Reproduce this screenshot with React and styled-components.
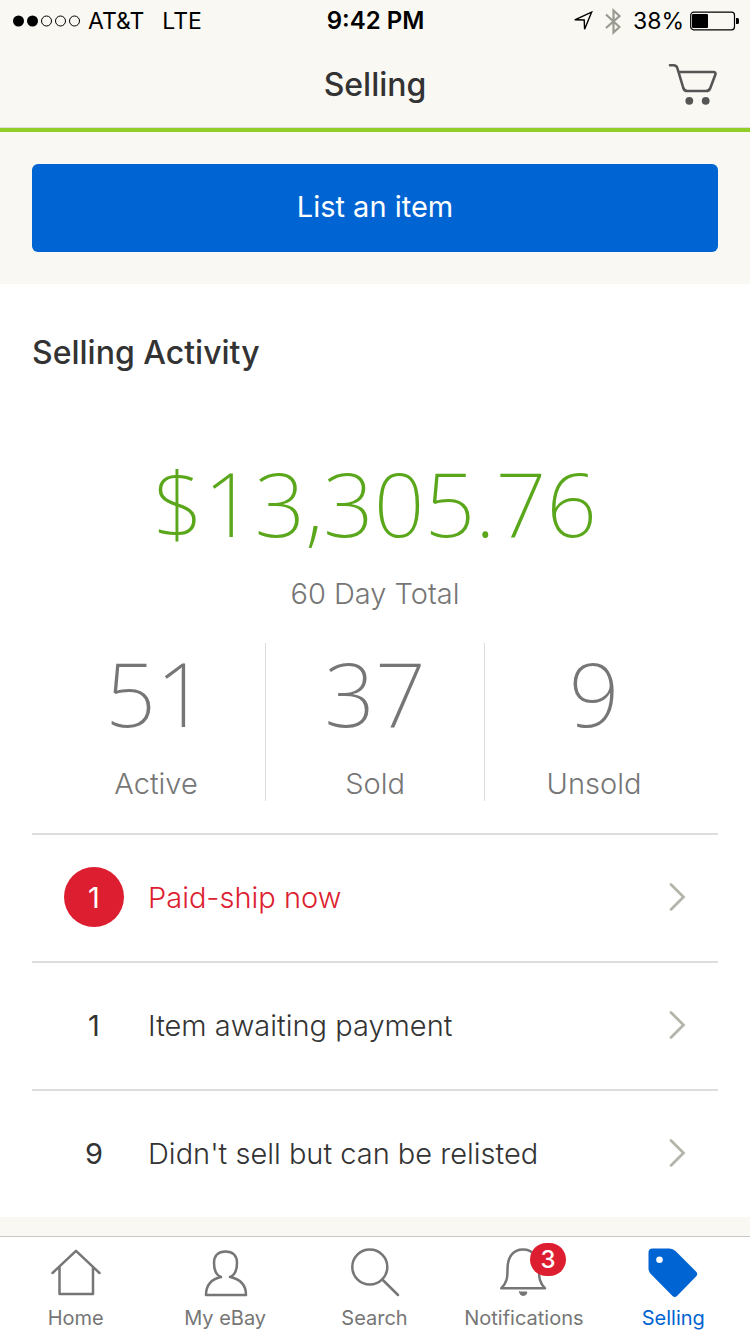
import React from "react";
import styled, { createGlobalStyle } from "styled-components";

const c = {
  cream: "#f9f8f3",
  ink: "#333333",
  grey: "#767676",
  line: "#dddddd",
  blue: "#0064d2",
  green: "#5ba71b",
  lime: "#92cd28",
  red: "#dd1e31",
};

const GlobalStyle = createGlobalStyle`
  *, *::before, *::after { box-sizing: border-box; }
  body {
    margin: 0;
    background: ${c.cream};
    color: ${c.ink};
    font-family: Inter, "Liberation Sans", sans-serif;
    font-size: 29px;
    line-height: 36px;
  }
  button { font: inherit; color: inherit; border: 0; background: none; padding: 0; cursor: pointer; }
  a { color: inherit; text-decoration: none; }
  h1, h2, p, ul { margin: 0; padding: 0; }
  ul { list-style: none; }
  svg { display: block; flex: none; }
`;

const Screen = styled.div`
  display: flex;
  flex-direction: column;
  min-height: 100vh;
`;

const StatusBar = styled.div`
  display: grid;
  grid-template-columns: 1fr auto 1fr;
  align-items: center;
  height: 40px;
  padding: 0 11px 0 12px;
  color: #000;
  font-size: 23px;
  line-height: 42px;
`;

const StatusGroup = styled.div`
  display: flex;
  align-items: center;
  gap: ${(p) => p.$gap}px;
  justify-content: ${(p) => (p.$end ? "flex-end" : "flex-start")};
`;

const Clock = styled.time`
  font-size: 24px;
  font-weight: 600;
`;

const Header = styled.header`
  display: grid;
  grid-template-columns: 1fr auto 1fr;
  align-items: center;
  height: 92px;
  padding: 0 32px;
  border-bottom: 4px solid ${c.lime};
  box-shadow: inset 0 -1px 0 ${c.line};
`;

const Title = styled.h1`
  grid-column: 2;
  padding-top: 2px;
  font-size: 32px;
  line-height: 44px;
  font-weight: 500;
`;

const CartButton = styled.button`
  justify-self: end;
`;

const ActionArea = styled.div`
  display: flex;
  padding: 32px;
`;

const ListButton = styled.button`
  flex: 1;
  height: 88px;
  padding-bottom: 2px;
  border-radius: 6px;
  background: ${c.blue};
  color: #fff;
  font-weight: 400;
`;

const Activity = styled.main`
  padding: 46px 32px 0;
  background: #fff;
`;

const SectionTitle = styled.h2`
  font-size: 32px;
  line-height: 46px;
  font-weight: 500;
`;

const Total = styled.div`
  display: flex;
  flex-direction: column;
  align-items: center;
  padding-top: 77px;
  color: ${c.grey};
`;

const Figure = styled.span`
  font-family: "Noto Sans", "Open Sans", sans-serif;
  font-size: 89px;
  line-height: 100px;
  font-weight: 200;
  margin-bottom: 23px;
  color: ${(p) => (p.$money ? c.green : c.grey)};
`;

const Caption = styled.span`
  font-weight: 300;
`;

const Stats = styled.div`
  display: flex;
  margin: 31px 15px 32px;
  color: ${c.grey};
`;

const Stat = styled.a`
  flex: 1;
  display: flex;
  flex-direction: column;
  align-items: center;
  height: 158px;

  & + & { border-left: 1px solid ${c.line}; }
`;

const Row = styled.a`
  display: flex;
  align-items: center;
  height: 128px;
  padding: 0 32px 2px;
  border-top: 2px solid ${c.line};
  color: ${(p) => (p.$urgent ? c.red : c.ink)};
  font-weight: 300;
`;

const Count = styled.span`
  display: flex;
  align-items: center;
  justify-content: center;
  width: 60px;
  height: 60px;
  margin-right: 24px;
  padding-top: 2px;
  border-radius: 50%;
  font-weight: 400;
  background: ${(p) => (p.$urgent ? c.red : "transparent")};
  color: ${(p) => (p.$urgent ? "#fff" : c.ink)};
`;

const RowText = styled.span`
  flex: 1;
  padding-top: 2px;
`;

const TabBar = styled.nav`
  position: sticky;
  bottom: 0;
  display: flex;
  height: 98px;
  margin-top: auto;
  padding: 0 2px 0 1px;
  border-top: 1px solid #c8c8c8;
  background: #fff;
`;

const Tab = styled.a`
  flex: 1 1 0;
  display: flex;
  flex-direction: column;
  align-items: center;
  gap: 7px;
  padding-top: 9px;
  color: ${(p) => (p.$active ? c.blue : c.grey)};
  font-size: 20px;
  line-height: 26px;
`;

const TabIcon = styled.span`
  position: relative;
  display: block;
`;

const Badge = styled.span`
  position: absolute;
  top: -3px;
  left: 31px;
  width: 36px;
  height: 33px;
  border-radius: 17px;
  background: ${c.red};
  color: #fff;
  font-size: 24px;
  line-height: 33px;
  font-weight: 500;
  text-align: center;
`;

const Signal = () => (
  <svg width="68" height="12" viewBox="0 0 68 12" role="img" aria-label="Signal 2 of 5">
    {[0, 1, 2, 3, 4].map((i) => (
      <circle key={i} cx={6.5 + i * 14} cy="6" r={i < 2 ? 5.5 : 5} fill={i < 2 ? "#000" : "none"} stroke={i < 2 ? "none" : "#000"} />
    ))}
  </svg>
);

const Location = () => (
  <svg width="20" height="20" viewBox="0 0 20 20" fill="none" stroke="#000" strokeWidth="1.4" aria-hidden="true">
    <path d="M18.6 1.2L1.8 8.8L11.2 9L11.6 18.2Z" />
  </svg>
);

const Bluetooth = () => (
  <svg width="16" height="27" viewBox="0 0 16 27" fill="none" stroke="#999a90" strokeWidth="2.2" aria-hidden="true">
    <path d="M1 6.5L14.5 19L8.5 24.5V2.5L14.5 8L1 20" />
  </svg>
);

const Battery = () => (
  <svg width="49" height="20" viewBox="0 0 49 20" aria-hidden="true">
    <rect x="0.7" y="1.2" width="43.8" height="17.6" rx="3" fill="none" stroke="#000" strokeWidth="1.2" />
    <rect x="2" y="3" width="16" height="14" rx="1" fill="#000" />
    <path d="M46 7H47.5Q49 7 49 8.5V11.5Q49 13 47.5 13H46Z" fill="#000" />
  </svg>
);

const Cart = () => (
  <svg width="50" height="42" viewBox="0 0 50 42" fill="none" stroke="#555" strokeWidth="2.6" strokeLinecap="round" strokeLinejoin="round" aria-hidden="true">
    <path d="M2 2.3H5.5Q8.5 2.3 9.3 5L15.3 25Q16.3 28 19.3 28H38Q41.3 28 42.3 25L47.3 11.8Q48.3 9 45.3 9H10.5" />
    <circle cx="21.3" cy="37.8" r="3.9" fill="#555" stroke="none" />
    <circle cx="37.7" cy="37.8" r="3.9" fill="#555" stroke="none" />
  </svg>
);

const Chevron = () => (
  <svg width="18" height="30" viewBox="0 0 18 30" fill="none" stroke="#b5b5ad" strokeWidth="2.8" aria-hidden="true">
    <path d="M3 2.5L15.5 15L3 27.5" strokeLinecap="round" />
  </svg>
);

const iconProps = {
  width: 50,
  height: 52,
  viewBox: "0 0 50 52",
  fill: "none",
  stroke: "currentColor",
  strokeWidth: 2.5,
  strokeLinecap: "round",
  strokeLinejoin: "round",
  "aria-hidden": true,
};

const HomeIcon = () => (
  <svg {...iconProps}>
    <path d="M1.5 27L25 4.8L48.5 27M8.5 21V48H42V21" />
  </svg>
);

const PersonIcon = () => (
  <svg {...iconProps}>
    <path d="M21 31C16 29 14 23 14 17C14 9.5 18.5 5.5 25.5 5.5S37 9.5 37 17C37 23 35 29 30 31C40 33 46 39 46 49H6C6 39 12 33 21 31Z" />
  </svg>
);

const SearchIcon = () => (
  <svg {...iconProps}>
    <circle cx="19.8" cy="21" r="17.5" />
    <path d="M32.3 33.5L48 49" />
  </svg>
);

const BellIcon = () => (
  <svg {...iconProps}>
    <path d="M2.2 42.3C8 36.5 8.5 32 8.5 23C8.5 11 14 3.5 24 3.5S40 11 40 23C40 32 40.5 36.5 46 42.3Z" />
    <path d="M20.5 46H28Q27.5 49.5 24.2 49.5T20.5 46Z" fill="currentColor" strokeWidth="1" />
  </svg>
);

const TagIcon = () => (
  <svg {...iconProps}>
    <path
      fillRule="evenodd"
      fill="currentColor"
      stroke="none"
      d="M4.5 2.5H21.5Q25 2.5 27.5 5L48 25.5Q50.5 28 48 30.5L29 50Q26.8 52 24.5 50L2.8 28Q.5 25.5.5 22.5V6.5Q.5 2.5 4.5 2.5ZM11.5 10.5A3.3 3.3 0 1 0 11.5 17.1A3.3 3.3 0 1 0 11.5 10.5Z"
    />
  </svg>
);

const stats = [
  { value: "51", label: "Active" },
  { value: "37", label: "Sold" },
  { value: "9", label: "Unsold" },
];

const tasks = [
  { count: 1, text: "Paid-ship now", urgent: true },
  { count: 1, text: "Item awaiting payment" },
  { count: 9, text: "Didn't sell but can be relisted" },
];

const tabs = [
  { label: "Home", Icon: HomeIcon },
  { label: "My eBay", Icon: PersonIcon },
  { label: "Search", Icon: SearchIcon },
  { label: "Notifications", Icon: BellIcon, badge: 3 },
  { label: "Selling", Icon: TagIcon, active: true },
];

export default function App() {
  return (
    <Screen>
      <GlobalStyle />
      <StatusBar>
        <StatusGroup $gap={8}>
          <Signal />
          <StatusGroup $gap={18}>
            <span>AT&amp;T</span>
            <span>LTE</span>
          </StatusGroup>
        </StatusGroup>
        <Clock>9:42 PM</Clock>
        <StatusGroup $gap={12} $end>
          <Location />
          <Bluetooth />
          <StatusGroup $gap={6}>
            <span>38%</span>
            <Battery />
          </StatusGroup>
        </StatusGroup>
      </StatusBar>

      <Header>
        <Title>Selling</Title>
        <CartButton type="button" aria-label="Cart">
          <Cart />
        </CartButton>
      </Header>

      <ActionArea>
        <ListButton type="button">List an item</ListButton>
      </ActionArea>

      <Activity>
        <SectionTitle>Selling Activity</SectionTitle>
        <Total>
          <Figure $money>$13,305.76</Figure>
          <Caption>60 Day Total</Caption>
        </Total>
        <Stats>
          {stats.map((s) => (
            <Stat key={s.label} href="#">
              <Figure>{s.value}</Figure>
              <Caption>{s.label}</Caption>
            </Stat>
          ))}
        </Stats>
        <ul>
          {tasks.map((t) => (
            <li key={t.text}>
              <Row href="#" $urgent={t.urgent}>
                <Count $urgent={t.urgent}>{t.count}</Count>
                <RowText>{t.text}</RowText>
                <Chevron />
              </Row>
            </li>
          ))}
        </ul>
      </Activity>

      <TabBar>
        {tabs.map(({ label, Icon, badge, active }) => (
          <Tab key={label} href="#" $active={active} aria-current={active ? "page" : undefined}>
            <TabIcon>
              <Icon />
              {badge && <Badge>{badge}</Badge>}
            </TabIcon>
            {label}
          </Tab>
        ))}
      </TabBar>
    </Screen>
  );
}
